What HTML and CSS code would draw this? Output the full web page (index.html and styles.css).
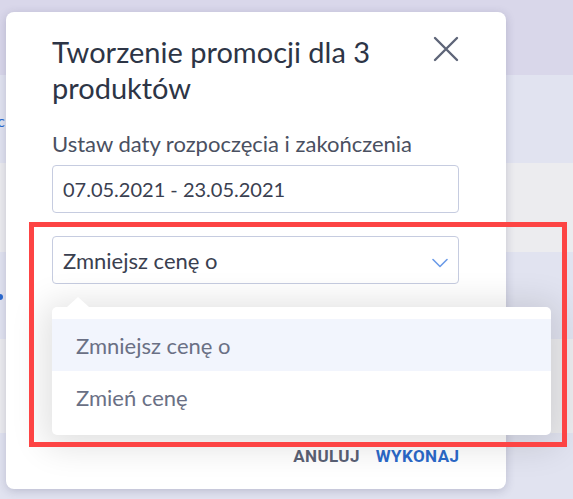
FILE: index.html
```html
<!DOCTYPE html>
<html lang="pl">
<head>
<meta charset="utf-8">
<title>Tworzenie promocji</title>
<link rel="stylesheet" href="styles.css">
</head>
<body>
<div class="page">
  <div class="band band-top"></div>
  <div class="band band-blue band-1"><span class="link">c</span></div>
  <div class="band band-gray band-2"></div>
  <div class="band band-blue band-3"><span class="dot"></span></div>
  <div class="band band-gray band-4"></div>
  <div class="band band-blue band-5"></div>
</div>

<div class="modal">
  <div class="modal-head">
    <h1 class="title">Tworzenie promocji dla 3 produktów</h1>
    <button class="close" aria-label="Zamknij">
      <svg width="26" height="26" viewBox="0 0 26 26"><path d="M2 2 L24 24 M24 2 L2 24" stroke="#5e6578" stroke-width="2.4" stroke-linecap="round" fill="none"/></svg>
    </button>
  </div>
  <div class="label">Ustaw daty rozpoczęcia i zakończenia</div>
  <div class="field">07.05.2021 - 23.05.2021</div>
  <div class="select-wrap">
    <div class="select">
      <span>Zmniejsz cenę o</span>
      <svg class="chev" width="16" height="10" viewBox="0 0 16 10"><path d="M1 1.5 L8 8.5 L15 1.5" stroke="#6b9be8" stroke-width="1.6" fill="none" stroke-linecap="round" stroke-linejoin="round"/></svg>
    </div>
    <ul class="menu">
      <li class="item active">Zmniejsz cenę o</li>
      <li class="item">Zmień cenę</li>
    </ul>
  </div>
  <div class="actions">
    <button class="btn btn-cancel">ANULUJ</button>
    <button class="btn btn-ok">WYKONAJ</button>
  </div>
</div>

<div class="annotation"></div>
</body>
</html>
```

FILE: styles.css
```css
* { box-sizing: border-box; }
html, body { margin: 0; padding: 0; }
body {
  width: 573px;
  height: 499px;
  overflow: hidden;
  position: relative;
  font-family: Lato, "Noto Sans", sans-serif;
  background: #e2e4f1;
}

.page { display: flex; flex-direction: column; height: 499px; }
.band { flex: none; position: relative; }
.band-top { height: 75px; background: #d9d7ea; }
.band-blue { background: #e1e3f0; }
.band-gray { background: #ececef; }
.band-1 { height: 88px; }
.band-2 { height: 89px; }
.band-3 { height: 87px; }
.band-4 { height: 94px; }
.band-5 { height: 66px; }
.link {
  display: block;
  margin: 38px 0 0 0;
  width: 5px;
  overflow: hidden;
  direction: rtl;
  color: #2a6ad0;
  font-size: 16px;
  line-height: 16px;
}
.dot {
  display: block;
  margin: 42px 0 0 -3px;
  width: 6px; height: 6px;
  border-radius: 50%;
  background: #2a6ad0;
}

.modal {
  position: absolute;
  left: 6px;
  top: 12px;
  width: 500px;
  height: 477px;
  background: #fff;
  border-radius: 8px;
  box-shadow: 0 2px 10px rgba(50, 50, 90, 0.22);
  padding: 22px 47px 23px 46px;
  display: flex;
  flex-direction: column;
}

.modal-head { display: flex; align-items: flex-start; justify-content: space-between; }
.title {
  margin: 0;
  font-size: 29px;
  line-height: 36px;
  font-weight: 400;
  color: #2d3546;
  width: 350px;
}
.close {
  margin-top: 2px;
  padding: 0;
  border: 0;
  background: none;
  width: 26px;
  height: 26px;
  display: block;
}
.close svg { display: block; }

.label {
  margin-top: 26px;
  font-size: 22px;
  line-height: 24px;
  color: #4a5061;
}
.field {
  margin-top: 9px;
  height: 48px;
  border: 1px solid #c6cce0;
  border-radius: 4px;
  padding: 0 10px;
  display: flex;
  align-items: center;
  font-size: 20px;
  color: #3a4050;
}

.select-wrap { position: relative; margin-top: 23px; }
.select {
  height: 48px;
  border: 1px solid #c6cce0;
  border-radius: 4px;
  padding: 0 10px 0 10px;
  display: flex;
  align-items: center;
  justify-content: space-between;
  font-size: 22px;
  color: #3a4050;
}
.chev { display: block; margin-top: 6px; }

.menu {
  position: absolute;
  left: 0;
  top: calc(100% + 23px);
  width: 499px;
  margin: 0;
  padding: 12px 0;
  list-style: none;
  background: #fff;
  border-radius: 5px;
  box-shadow: 0 4px 34px 8px rgba(0, 0, 0, 0.12);
  z-index: 2;
}
.menu::before {
  content: "";
  position: absolute;
  left: 15px;
  top: -10px;
  border-left: 11px solid transparent;
  border-right: 11px solid transparent;
  border-bottom: 10px solid #fff;
}
.item {
  height: 52px;
  display: flex;
  align-items: center;
  padding-left: 24px;
  font-size: 22px;
  color: #6a7085;
}
.item.active { background: #f2f5fd; }

.actions {
  margin-top: auto;
  display: flex;
  justify-content: flex-end;
  gap: 16px;
}
.btn {
  border: 0;
  background: none;
  padding: 0;
  font-family: Roboto, "Liberation Sans", sans-serif;
  font-weight: 700;
  font-size: 17px;
  letter-spacing: 0.4px;
  line-height: 20px;
}
.btn-cancel { color: #5a6175; }
.btn-ok { color: #2b69c9; margin-right: -0.4px; }

.annotation {
  position: absolute;
  left: 29px;
  top: 222px;
  width: 538px;
  height: 225px;
  border: 5px solid #fd4444;
  z-index: 5;
}
```
